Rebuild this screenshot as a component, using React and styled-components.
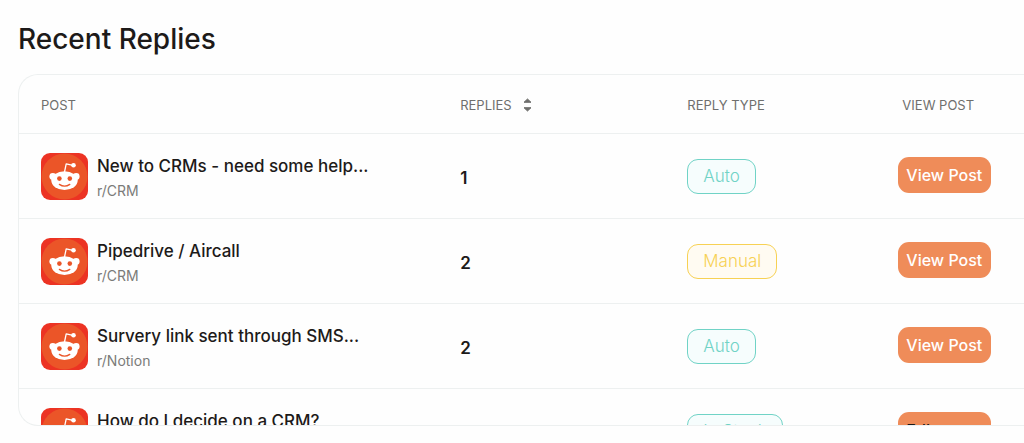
import React from 'react';
import styled, { createGlobalStyle } from 'styled-components'

const GlobalStyle = createGlobalStyle`
  * {
    box-sizing: border-box;
  }
  body {
    margin: 0;
    background: #fefefe;
    color: #1d1a19;
    font-family: Inter, 'Liberation Sans', sans-serif;
    overflow: hidden;
  }
`

const Page = styled.main`
  display: flex;
  flex-direction: column;
  height: 100vh;
  padding: 18px 0 17px 18px;
`

const Title = styled.h1`
  margin: 0 0 14px;
  font-size: 28px;
  font-weight: 500;
  line-height: 42px;
`

const Panel = styled.div`
  flex: 1;
  min-height: 0;
  overflow: hidden;
  border: 1px solid #edf0f0;
  border-right: 0;
  border-radius: 20px 0 0 20px;
`

const Table = styled.table`
  width: 100%;
  table-layout: fixed;
  border-collapse: separate;
  border-spacing: 0;
`

const HeadCell = styled.th`
  width: ${props => props.$width};
  height: 59px;
  padding: 2px 0 0 ${props => props.$indent || '0'};
  border-bottom: 1px solid #edf0f0;
  color: #6f6f6d;
  font-size: 13px;
  font-weight: 400;
  text-align: left;
`

const Cell = styled.td`
  height: 85px;
  padding: 0 0 0 ${props => props.$indent || '0'};
  border-bottom: 1px solid #edf0f0;
`

const SortButton = styled.button`
  display: flex;
  align-items: center;
  gap: 11px;
  padding: 0;
  border: 0;
  background: none;
  color: inherit;
  font: inherit;
`

const Post = styled.div`
  display: flex;
  align-items: center;
  gap: 9px;
`

const PostText = styled.div`
  padding-top: 4px;
`

const PostName = styled.div`
  font-size: 17px;
  font-weight: 500;
  line-height: 26px;
  white-space: nowrap;
`

const Community = styled.div`
  color: #7b7b79;
  font-size: 14px;
  line-height: 24px;
`

const Count = styled.span`
  display: block;
  padding-top: 4px;
  font-size: 17px;
  font-weight: 600;
`

const tones = {
  teal: { line: '#70d3c6', fill: '#f6fdfd' },
  yellow: { line: '#f7d154', fill: '#fffbf2' }
}

const Badge = styled.span`
  display: inline-block;
  padding: 0 15px;
  border: 1px solid ${props => tones[props.$tone].line};
  border-radius: 11px;
  background: ${props => tones[props.$tone].fill};
  color: ${props => tones[props.$tone].line};
  font-size: 17px;
  font-weight: 300;
  line-height: 33px;
  vertical-align: middle;
`

const ViewButton = styled.button`
  display: block;
  min-width: 93px;
  height: 36px;
  margin-bottom: 2px;
  padding: 0 8px;
  border: 0;
  border-radius: 11px;
  background: #ef8c59;
  color: ${props => props.$dark ? '#1d1a19' : '#fff'};
  font: 500 16px/36px Inter, 'Liberation Sans', sans-serif;
  text-align: left;
`

const RedditIcon = () => (
  <svg width="47" height="47" viewBox="0 0 47 47" aria-hidden="true">
    <rect width="47" height="47" rx="9" fill="#ec3323" />
    <circle cx="23.5" cy="23.5" r="23" fill="#eb5528" />
    <path d="M23.5 19L25.2 10.8L32 12.3" fill="none" stroke="#fff" strokeWidth="1.3" strokeLinejoin="round" />
    <circle cx="32.5" cy="12.3" r="2.3" fill="#fff" />
    <circle cx="11.8" cy="23.5" r="3.4" fill="#fff" />
    <circle cx="35.2" cy="23.5" r="3.4" fill="#fff" />
    <ellipse cx="23.5" cy="27.6" rx="13.2" ry="9.3" fill="#fff" />
    <circle cx="18.4" cy="25.6" r="2.3" fill="#eb5528" />
    <circle cx="28.8" cy="25.6" r="2.3" fill="#eb5528" />
    <path d="M18.4 31.4Q23.5 35 28.8 31.4" fill="none" stroke="#eb5528" strokeWidth="1.3" strokeLinecap="round" />
  </svg>
)

const SortIcon = () => (
  <svg width="9" height="14" viewBox="0 0 9 14" fill="#6f6f6d" stroke="#6f6f6d" strokeLinejoin="round" aria-hidden="true">
    <path d="M4.5 1L8 4.3H1ZM4.5 13L1 9.7H8Z" />
  </svg>
)

const replies = [
  { id: 1, post: 'New to CRMs - need some help...', community: 'r/CRM', count: 1, type: 'Auto', tone: 'teal', action: 'View Post' },
  { id: 2, post: 'Pipedrive / Aircall', community: 'r/CRM', count: 2, type: 'Manual', tone: 'yellow', action: 'View Post' },
  { id: 3, post: 'Survery link sent through SMS...', community: 'r/Notion', count: 2, type: 'Auto', tone: 'teal', action: 'View Post' },
  { id: 4, post: 'How do I decide on a CRM?', community: 'r/CRM', count: 1, type: 'In Stock', tone: 'teal', action: 'Edit', dark: true }
]

const App = () => (
  <Page>
    <GlobalStyle />
    <Title>Recent Replies</Title>
    <Panel>
      <Table>
        <thead>
          <tr>
            <HeadCell $width="43.9%" $indent="22px">POST</HeadCell>
            <HeadCell $width="22.6%">
              <SortButton type="button">REPLIES <SortIcon /></SortButton>
            </HeadCell>
            <HeadCell $width="21%">REPLY TYPE</HeadCell>
            <HeadCell $indent="4px">VIEW POST</HeadCell>
          </tr>
        </thead>
        <tbody>
          {replies.map(reply => (
            <tr key={reply.id}>
              <Cell $indent="22px">
                <Post>
                  <RedditIcon />
                  <PostText>
                    <PostName>{reply.post}</PostName>
                    <Community>{reply.community}</Community>
                  </PostText>
                </Post>
              </Cell>
              <Cell><Count>{reply.count}</Count></Cell>
              <Cell><Badge $tone={reply.tone}>{reply.type}</Badge></Cell>
              <Cell>
                <ViewButton type="button" $dark={reply.dark}>{reply.action}</ViewButton>
              </Cell>
            </tr>
          ))}
        </tbody>
      </Table>
    </Panel>
  </Page>
)

export default App
